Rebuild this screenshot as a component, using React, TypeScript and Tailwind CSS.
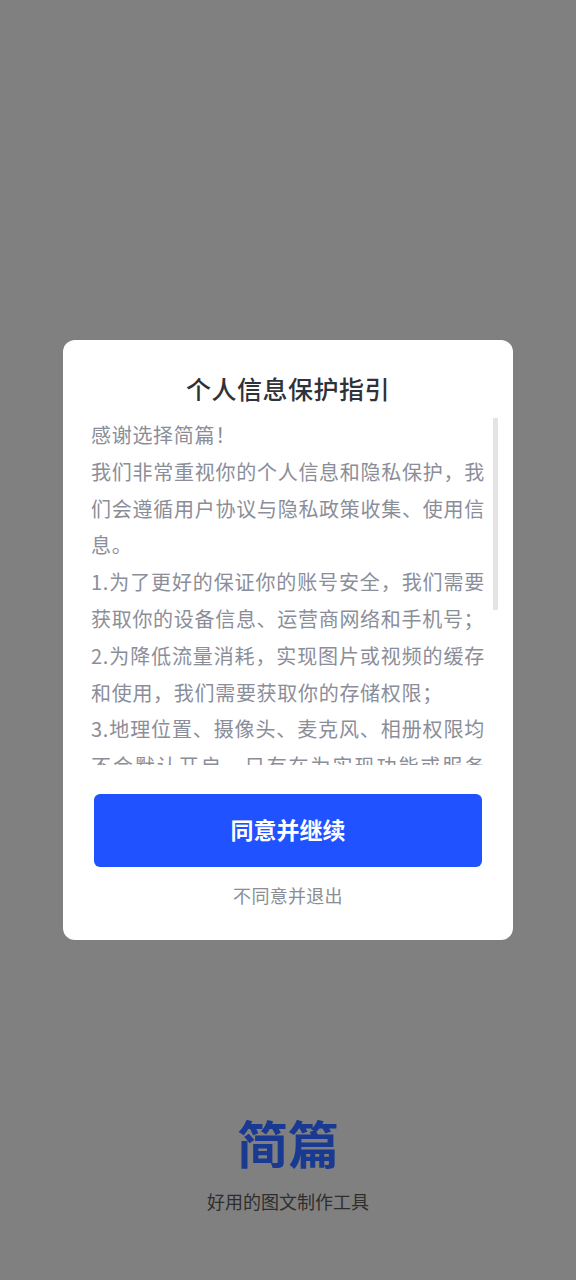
const paragraphs = [
  "感谢选择简篇！",
  "我们非常重视你的个人信息和隐私保护，我们会遵循用户协议与隐私政策收集、使用信息。",
  "1.为了更好的保证你的账号安全，我们需要获取你的设备信息、运营商网络和手机号；",
  "2.为降低流量消耗，实现图片或视频的缓存和使用，我们需要获取你的存储权限；",
  "3.地理位置、摄像头、麦克风、相册权限均不会默认开启，只有在为实现功能或服务时，才会向你申请。",
];

const App = () => {
  return (
    <div className="w-[576px] h-[1280px] overflow-hidden bg-[#808080] flex flex-col items-center pt-[340px] font-['Noto_Sans_CJK_SC',sans-serif]">
      <div className="w-[450px] h-[600px] shrink-0 bg-white rounded-xl flex flex-col">
        <h1 className="mt-[30px] h-[36px] leading-[36px] text-center text-[25px] tracking-[0.5px] font-medium text-[#2f3238]">
          个人信息保护指引
        </h1>
        <div className="relative mt-[12px] h-[347px] overflow-hidden">
          <div className="-mt-[1px] pl-[28px] w-[422px] text-[20px] leading-[36.8px] tracking-[0.7px] text-justify text-[#8b8e99]">
            {paragraphs.map((text) => (
              <p key={text}>{text}</p>
            ))}
          </div>
          <div className="absolute top-0 left-[430px] w-[5px] h-[192px] bg-[#e4e4e4]" />
        </div>
        <button className="mt-[29px] mx-[31px] h-[73px] shrink-0 rounded-[6px] pb-[3px] bg-[#2152ff] text-white text-[23px] font-bold">
          同意并继续
        </button>
        <div className="mt-[15px] h-[26px] leading-[26px] text-center text-[18px] tracking-[0.3px] text-[#8a8d94]">
          不同意并退出
        </div>
      </div>
      <div className="mt-[172px] h-[60px] leading-[60px] text-[51px] font-bold text-[#1a3a92]">简篇</div>
      <div className="mt-[16px] text-[18px] leading-[26px] text-[#2e2e2e]">好用的图文制作工具</div>
    </div>
  );
};

export default App;
